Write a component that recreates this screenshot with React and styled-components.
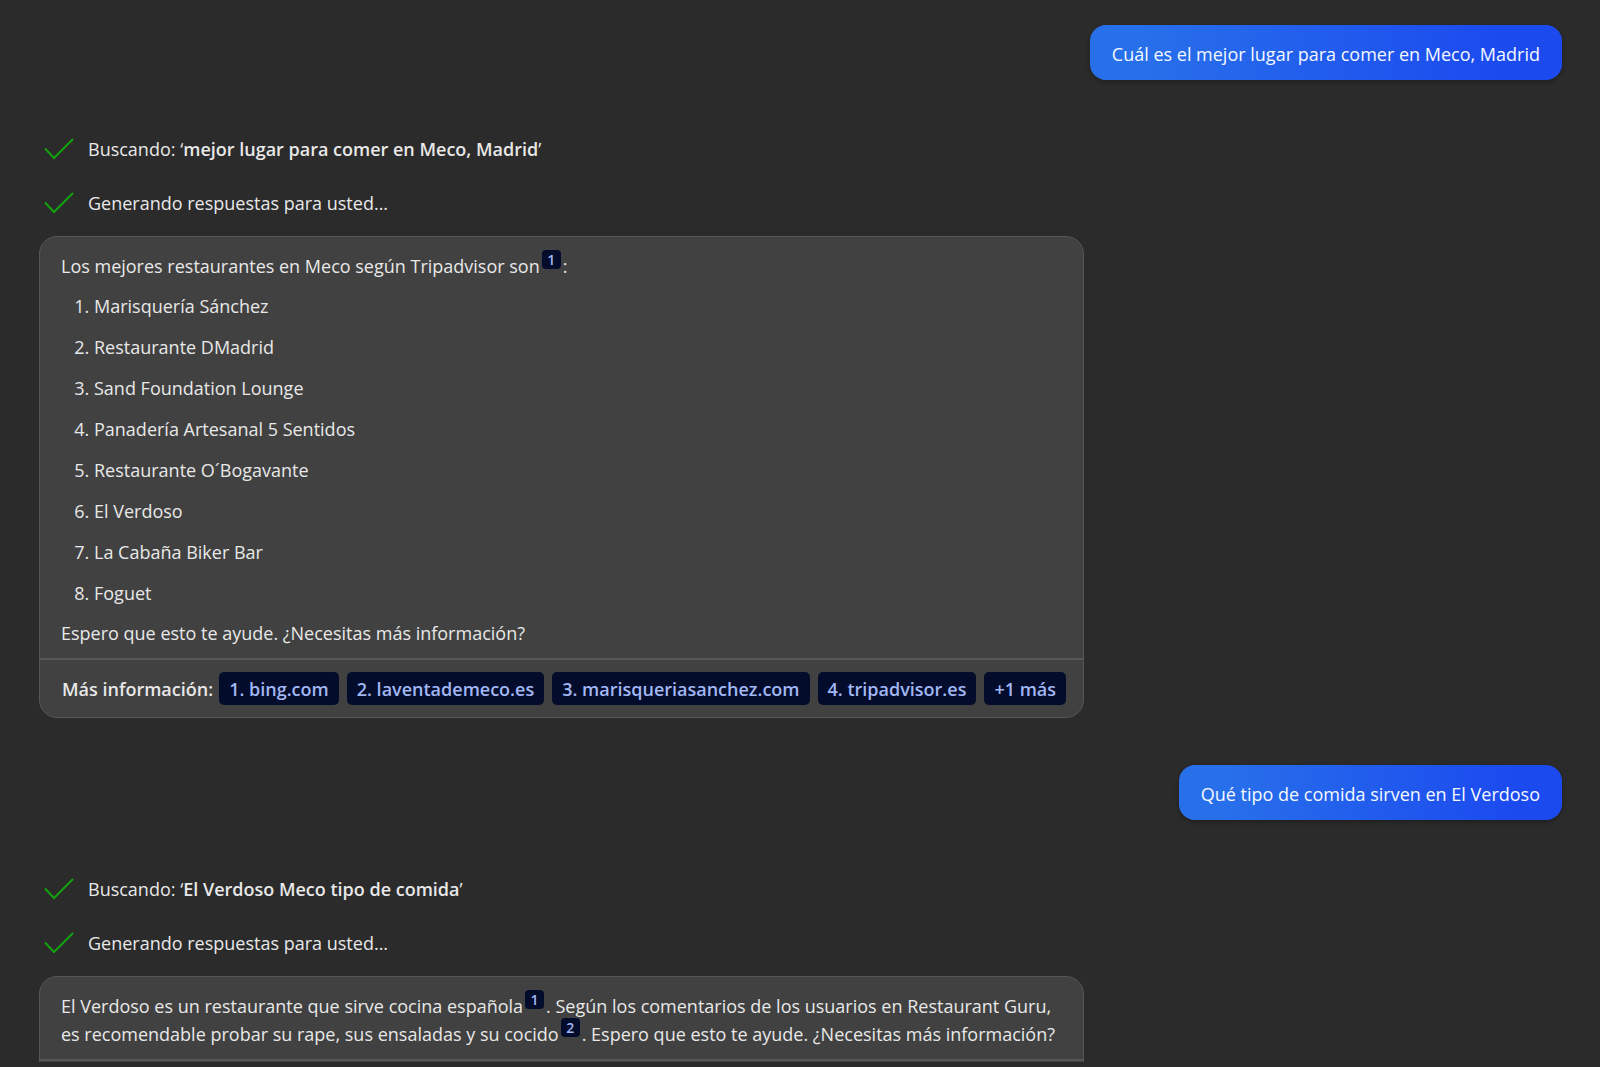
import React from "react";
import styled, { createGlobalStyle } from "styled-components";

const places = [
  "Marisquería Sánchez",
  "Restaurante DMadrid",
  "Sand Foundation Lounge",
  "Panadería Artesanal 5 Sentidos",
  "Restaurante O´Bogavante",
  "El Verdoso",
  "La Cabaña Biker Bar",
  "Foguet",
];

const MecoAnswer = () => (
  <>
    <p>
      Los mejores restaurantes en Meco según Tripadvisor son
      <Citation href="#meco-1">1</Citation>:
    </p>
    <Places>
      {places.map((place) => (
        <li key={place}>{place}</li>
      ))}
    </Places>
    <p>Espero que esto te ayude. ¿Necesitas más información?</p>
  </>
);

const VerdosoAnswer = () => (
  <p>
    El Verdoso es un restaurante que sirve cocina española
    <Citation href="#verdoso-1">1</Citation>. Según los comentarios de los
    usuarios en Restaurant Guru, es recomendable probar su rape, sus ensaladas y
    su cocido
    <Citation href="#verdoso-2">2</Citation>. Espero que esto te ayude.
    ¿Necesitas más información?
  </p>
);

const conversation = [
  {
    id: "meco",
    question: "Cuál es el mejor lugar para comer en Meco, Madrid",
    search: "mejor lugar para comer en Meco, Madrid",
    AnswerText: MecoAnswer,
    sources: [
      "bing.com",
      "laventademeco.es",
      "marisqueriasanchez.com",
      "tripadvisor.es",
    ],
    hiddenSources: 1,
  },
  {
    id: "verdoso",
    question: "Qué tipo de comida sirven en El Verdoso",
    search: "El Verdoso Meco tipo de comida",
    AnswerText: VerdosoAnswer,
    sources: [],
    hiddenSources: 0,
  },
];

const Status = ({ children }) => (
  <StatusRow>
    <Check viewBox="0 0 30 22" aria-hidden="true">
      <path d="M1 10.5 L10 20 L29 1" />
    </Check>
    <span>{children}</span>
  </StatusRow>
);

const Turn = ({ turn }) => {
  const { question, search, AnswerText, sources, hiddenSources } = turn;

  return (
    <>
      <Question>{question}</Question>
      <Statuses>
        <Status>
          Buscando: ‘<strong>{search}</strong>’
        </Status>
        <Status>Generando respuestas para usted...</Status>
      </Statuses>
      <Card>
        <Answer>
          <AnswerText />
        </Answer>
        <Footer>
          {sources.length > 0 && <FooterLabel>Más información:</FooterLabel>}
          {sources.map((source, index) => (
            <Source key={source} href={`https://${source}`}>
              {index + 1}. {source}
            </Source>
          ))}
          {hiddenSources > 0 && (
            <Source as="button" type="button">
              +{hiddenSources} más
            </Source>
          )}
        </Footer>
      </Card>
    </>
  );
};

const App = () => (
  <>
    <GlobalStyle />
    <Page>
      <Chat>
        {conversation.map((turn) => (
          <Turn key={turn.id} turn={turn} />
        ))}
      </Chat>
    </Page>
  </>
);

const GlobalStyle = createGlobalStyle`
  * {
    box-sizing: border-box;
  }

  body {
    margin: 0;
    background: #2b2b2b;
    color: #e8e8e8;
    font-family: "Open Sans", "Noto Sans", sans-serif;
    font-size: 18px;
    line-height: 28px;
  }

  p {
    margin: 0;
  }

  strong {
    font-weight: 600;
  }
`;

const Page = styled.div`
  height: 100vh;
  padding-bottom: 5px;
`;

const Chat = styled.main`
  display: flex;
  flex-direction: column;
  height: 100%;
  overflow: hidden;
  padding: 25px 38px 0 39px;
`;

const Question = styled.div`
  flex-shrink: 0;
  align-self: flex-end;
  padding: 15px 22px 12px;
  border-radius: 16px;
  background: linear-gradient(90deg, #2870ea 10%, #1b4aef 88%);
  box-shadow: 0 2px 5px rgba(0, 0, 0, 0.3);
  color: #f5f8ff;
`;

const Statuses = styled.div`
  display: flex;
  flex-direction: column;
  flex-shrink: 0;
  gap: 26px;
  margin: 55px 0 19px;
`;

const StatusRow = styled.div`
  display: flex;
  align-items: center;
  gap: 14px;
  padding-left: 5px;
`;

const Check = styled.svg`
  width: 30px;
  height: 22px;
  fill: none;
  stroke: #13a10e;
  stroke-width: 2;
`;

const Card = styled.section`
  flex-shrink: 0;
  width: 100%;
  max-width: 1045px;
  margin-bottom: 47px;
  border: 1px solid #565656;
  border-radius: 18px;
  background: #414141;
`;

const Answer = styled.div`
  display: flex;
  flex-direction: column;
  gap: 12px;
  padding: 15px 21px 11px;
`;

const Places = styled.ol`
  display: flex;
  flex-direction: column;
  gap: 13px;
  margin: 0;
  padding-left: 33px;
`;

const Citation = styled.a`
  display: inline-block;
  width: 19px;
  height: 19px;
  margin: -2px 2px 0;
  border-radius: 4px;
  background: #030d2b;
  color: #a2b7f5;
  font-size: 14px;
  font-weight: 600;
  line-height: 19px;
  text-align: center;
  text-decoration: none;
  vertical-align: top;
`;

const Footer = styled.div`
  display: flex;
  flex-wrap: wrap;
  align-items: center;
  gap: 8px;
  min-height: 59px;
  padding: 12px 12px 12px 22px;
  border-top: 2px solid #565656;
`;

const FooterLabel = styled.span`
  margin-right: -2px;
  font-weight: 600;
`;

const Source = styled.a`
  padding: 3px 10px 2px;
  border: 0;
  border-radius: 5px;
  background: #030d2b;
  color: #a2b7f5;
  font: inherit;
  font-weight: 600;
  text-decoration: none;
`;

export default App;
